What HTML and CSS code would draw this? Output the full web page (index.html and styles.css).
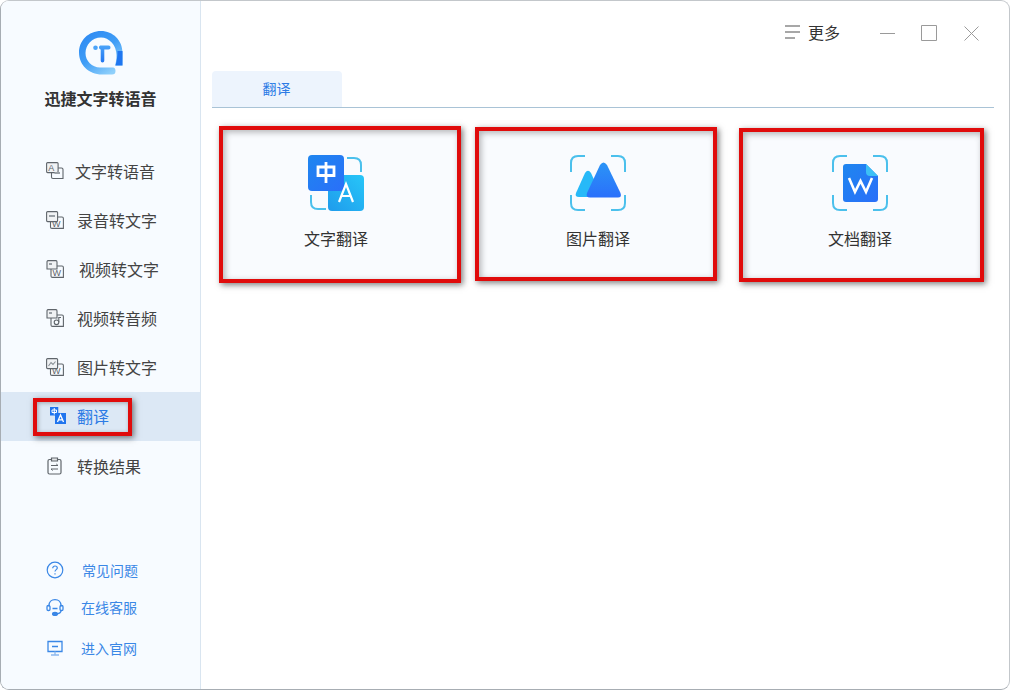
FILE: index.html
```html
<!DOCTYPE html>
<html lang="zh-CN">
<head>
<meta charset="utf-8">
<title>迅捷文字转语音</title>
<link rel="stylesheet" href="styles.css">
</head>
<body>
<div class="window">
  <aside class="sidebar">
    <div class="brand">
      <svg class="logo" width="46" height="46" viewBox="0 0 46 46">
        <defs>
          <linearGradient id="lg" x1="0" y1="0" x2="0.7" y2="1"><stop offset="0" stop-color="#2a86f2"/><stop offset="0.55" stop-color="#3f9df6"/><stop offset="1" stop-color="#8fd0fb"/></linearGradient>
          <linearGradient id="lt" x1="0" y1="0" x2="0" y2="1"><stop offset="0" stop-color="#4aa3f9"/><stop offset="1" stop-color="#1f74f0"/></linearGradient>
        </defs>
        <path fill="url(#lg)" d="M23 1C35 1 44.500 10.500 44.500 22.500V35.500H37C38 32 38.500 29 38.500 25C38.500 15 31 7.500 23 7.500C14 7.500 7.500 15 7.500 23C7.500 31 14 37.500 22 37.500H35Q37.500 37.500 37.500 41Q37.500 44.500 34 44.500H24C10.500 44.500 1 34.500 1 22.500C1 10.500 10.500 1 23 1Z"/>
        <path fill="#1f76f0" d="M39.500 21H44.500V35.500H37.500C38.800 31 39.500 26 39.500 21Z"/>
        <circle cx="17.500" cy="17.800" r="2.300" fill="#4aa3f9"/>
        <path fill="url(#lt)" d="M21 17.300C21 16 21.800 15.500 23 15.500H30.500C31.800 15.500 32.500 16.300 32.500 17.500C32.500 18.700 31.800 19.500 30.500 19.500H26.300V30.500C26.300 31.800 25.500 32.500 24.500 32.500C23.500 32.500 22.700 31.800 22.700 30.500V19.500C21.700 19.500 21 18.600 21 17.300Z"/>
      </svg>
      <h1 class="brand-name">迅捷文字转语音</h1>
    </div>

    <nav class="nav">
      <a class="nav-item">
        <svg class="nav-icon" width="18" height="18" viewBox="0 0 18 18" fill="none" stroke="#5f656b" stroke-width="1.100"><rect x="0.600" y="0.600" width="11.500" height="10" rx="1" fill="#f0f2f4"/><path d="M5.500 10.600V15Q5.500 16.500 7 16.500H17V7.500Q17 6 15.500 6H12.100"/><text x="2.300" y="8.800" class="icon-glyph">A</text><path stroke="#9aa0a6" stroke-width="2" d="M8.500 11H14"/></svg>
        <span class="nav-label">文字转语音</span>
      </a>
      <a class="nav-item nav-item-1">
        <svg class="nav-icon" width="18" height="18" viewBox="0 0 18 18" fill="none" stroke="#5f656b" stroke-width="1.100"><rect x="0.600" y="0.600" width="11" height="10" rx="1" fill="#f0f2f4"/><path d="M4.500 10.600V16Q4.500 17.400 6 17.400H17.400V7.500Q17.400 6 16 6H11.600"/><path stroke="#9aa0a6" stroke-width="2.200" d="M3 5H9"/><text x="6" y="16" class="icon-glyph">W</text></svg>
        <span class="nav-label">录音转文字</span>
      </a>
      <a class="nav-item nav-item-2">
        <svg class="nav-icon" width="18" height="18" viewBox="0 0 18 18" fill="none" stroke="#5f656b" stroke-width="1.100"><path d="M2 0.600H10Q11 0.600 11 2V9H1V2Q1 0.600 2 0.600Z" fill="#f0f2f4"/><path d="M5 9V16Q5 17.400 6.500 17.400H17.400V7.500Q17.400 6 16 6H11"/><path stroke="#9aa0a6" stroke-width="2" d="M3 4H6"/><text x="6.500" y="16" class="icon-glyph">W</text></svg>
        <span class="nav-label">视频转文字</span>
      </a>
      <a class="nav-item nav-item-1">
        <svg class="nav-icon" width="18" height="18" viewBox="0 0 18 18" fill="none" stroke="#5f656b" stroke-width="1.100"><path d="M2 0.600H10Q11 0.600 11 2V9H1V2Q1 0.600 2 0.600Z" fill="#f0f2f4"/><path d="M5 9V16Q5 17.400 6.500 17.400H17.400V7.500Q17.400 6 16 6H11"/><path stroke="#9aa0a6" stroke-width="2" d="M3 4H6"/><circle cx="10.500" cy="13.300" r="2.300"/><path d="M12.800 13.300V8.500H15"/></svg>
        <span class="nav-label">视频转音频</span>
      </a>
      <a class="nav-item nav-item-1">
        <svg class="nav-icon" width="18" height="18" viewBox="0 0 18 18" fill="none" stroke="#5f656b" stroke-width="1.100"><rect x="0.600" y="0.600" width="11" height="10" rx="1" fill="#f0f2f4"/><path d="M4.500 10.600V16Q4.500 17.400 6 17.400H17.400V7.500Q17.400 6 16 6H11.600"/><path stroke="#8a9096" d="M2.500 8L5 4.500L7 6.500L9.500 3.500"/><text x="6" y="16" class="icon-glyph">W</text></svg>
        <span class="nav-label">图片转文字</span>
      </a>
      <a class="nav-item nav-item-active">
        <svg class="nav-icon" width="16" height="17" viewBox="0 0 16 17"><path fill="#1f74ee" d="M0 0H8.500V8.500H0Z"/><path fill="#1f74ee" d="M5 6H16V17H5Z"/><path fill="#dce8f5" d="M8.500 0H11V6H8.500Z"/><path stroke="#fff" fill="none" d="M2 3H6.500V5.500H2Z M4.250 1V7.500"/><path stroke="#fff" stroke-width="1.300" fill="none" d="M7.500 15L10.500 8L13.500 15M8.500 12.800H12.500"/></svg>
        <span class="nav-label">翻译</span>
        <span class="mark mark-nav"></span>
      </a>
      <a class="nav-item nav-item-1 nav-item-last">
        <svg class="nav-icon" width="18" height="18" viewBox="0 0 18 18" fill="none" stroke="#5f656b" stroke-width="1.200"><path d="M5 2.500H3.500Q2 2.500 2 4V15.500Q2 17 3.500 17H13.500Q15 17 15 15.500V4Q15 2.500 13.500 2.500H12"/><path d="M5.500 1H11.500V4H5.500Z" fill="#e4e6e8"/><path d="M5 8.500H12L10.300 7M12 12H5L6.700 13.500" stroke-width="1"/></svg>
        <span class="nav-label">转换结果</span>
      </a>
    </nav>

    <div class="help">
      <a class="help-item">
        <svg width="18" height="18" viewBox="0 0 18 18" fill="none" stroke="#3a87e6" stroke-width="1.200"><circle cx="9" cy="9" r="7.800"/><path d="M6.700 7.200C6.700 5.800 7.800 5 9 5C10.300 5 11.300 5.900 11.300 7C11.300 8.600 9 8.700 9 10.600"/><path d="M9 12.300V13.400"/></svg>
        <span class="help-label help-label-a">常见问题</span>
      </a>
      <a class="help-item help-item-b">
        <svg width="18" height="18" viewBox="0 0 18 18" fill="none" stroke="#3a87e6" stroke-width="1.300"><path d="M3 8.500V7.500C3 4 5.500 1.700 9 1.700C12.500 1.700 15 4 15 7.500V8.500"/><rect x="1" y="7.500" width="3" height="5" rx="1.300"/><rect x="14" y="7.500" width="3" height="5" rx="1.300"/><path d="M15 12.500C15 14.500 13.500 15.500 11 15.800"/><ellipse cx="9" cy="15.900" rx="2.400" ry="1.400" fill="#3a87e6"/><path d="M6.500 10.500H11.500"/></svg>
        <span class="help-label">在线客服</span>
      </a>
      <a class="help-item help-item-c">
        <svg width="18" height="18" viewBox="0 0 18 18" fill="none" stroke="#3a87e6" stroke-width="1.300"><path d="M2 2.500H16V12.500H2Z"/><path d="M6 7.500H12"/><path d="M9 12.500V16M5 16H13" stroke="#8cb8ef"/></svg>
        <span class="help-label">进入官网</span>
      </a>
    </div>
  </aside>

  <main class="main">
    <header class="topbar">
      <div class="more">
        <svg width="16" height="16" viewBox="0 0 16 16" stroke="#8a8a8a" stroke-width="1.600"><path d="M0 2H15M0 8H15M0 14H10"/></svg>
        <span>更多</span>
      </div>
      <svg class="win-btn win-min" width="15" height="3" viewBox="0 0 15 3" stroke="#9a9a9a"><path d="M0 1.500H15"/></svg>
      <svg class="win-btn win-max" width="16" height="16" viewBox="0 0 16 16" fill="none" stroke="#9a9a9a"><path d="M0.500 0.500H15.500V15.500H0.500Z"/></svg>
      <svg class="win-btn win-close" width="15" height="15" viewBox="0 0 15 15" stroke="#9a9a9a"><path d="M0.500 0.500L14.500 14.500M14.500 0.500L0.500 14.500"/></svg>
    </header>

    <div class="tabs"><div class="tab">翻译</div></div>

    <section class="cards">
      <article class="card card-1">
        <svg class="card-icon" width="56" height="56" viewBox="0 0 56 56" fill="none">
          <defs>
            <linearGradient id="b1" x1="0" y1="0" x2="1" y2="1"><stop offset="0" stop-color="#1f86ef"/><stop offset="1" stop-color="#2a6ff9"/></linearGradient>
            <linearGradient id="b2" x1="1" y1="0" x2="0" y2="1"><stop offset="0" stop-color="#27c6f8"/><stop offset="1" stop-color="#1f9bec"/></linearGradient>
          </defs>
          <path d="M39 3H46Q53 3 53 10V17M3 40V47Q3 54 10 54H18" stroke="#4bc0ec" stroke-width="2"/>
          <rect x="20" y="20" width="36" height="36" rx="4" fill="url(#b2)"/>
          <rect width="36" height="36" rx="4" fill="url(#b1)"/>
          <path d="M10 12H26V20.500H10Z M18 7V28" stroke="#fff" stroke-width="2.800"/>
          <path d="M31 47L38 29L45 47M33.500 41H42.500" stroke="#fff" stroke-width="2.200"/>
        </svg>
        <h2 class="card-title">文字翻译</h2>
      </article>
      <article class="card card-2">
        <svg class="card-icon" width="56" height="56" viewBox="0 0 56 56" fill="none">
          <defs><linearGradient id="m1" x1="0" y1="0" x2="0" y2="1"><stop offset="0" stop-color="#2b94f6"/><stop offset="1" stop-color="#2a70fb"/></linearGradient></defs>
          <path d="M1 17V8Q1 1 8 1H15M41 1H48Q55 1 55 8V17M55 40V48Q55 55 48 55H41M15 55H8Q1 55 1 48V40" stroke="#4bc0ec" stroke-width="2"/>
          <path d="M6 38L15 18Q18 13.500 21 18L32 42H9Q4.500 42 6 38Z" fill="#27b9f8"/>
          <path d="M17 38L30 10Q33.500 5 37 10L50.500 38Q52 42.500 48 42.500H20Q15.500 42.500 17 38Z" fill="url(#m1)"/>
        </svg>
        <h2 class="card-title">图片翻译</h2>
      </article>
      <article class="card card-3">
        <svg class="card-icon" width="56" height="56" viewBox="0 0 56 56" fill="none">
          <path d="M1 17V8Q1 1 8 1H15M41 1H48Q55 1 55 8V17M55 40V48Q55 55 48 55H41M15 55H8Q1 55 1 48V40" stroke="#4bc0ec" stroke-width="2"/>
          <path d="M14 9H34L46 21V44Q46 47 43 47H14Q11 47 11 44V12Q11 9 14 9Z" fill="url(#b1)"/>
          <path d="M34 9L46 21H38Q34 21 34 17Z" fill="#3cc0f5"/>
          <path d="M17 23L23 37L28.500 26L34 37L40 23" stroke="#fff" stroke-width="2.600"/>
        </svg>
        <h2 class="card-title">文档翻译</h2>
      </article>
    </section>
  </main>
</div>
</body>
</html>
```
FILE: styles.css
```css
* { box-sizing: border-box; }
html, body { margin: 0; height: 100%; background: #fff; }
body { font-family: "Noto Sans CJK SC", "Liberation Sans", sans-serif; color: #333; overflow: hidden; }
a { color: inherit; text-decoration: none; }

.window {
  width: 1010px; height: 690px; display: flex;
  background: #fff;
  border: 1px solid #c3c7cb; border-left-color: #a7adb3; border-bottom-color: #a7adb3;
  border-radius: 9px; overflow: hidden;
}

.sidebar {
  width: 200px; flex: none; display: flex; flex-direction: column;
  background: #f7fbff; border-right: 1px solid #d9e5f0;
}
.brand { display: flex; flex-direction: column; align-items: center; padding: 29px 0 0 0; }
.logo { display: block; margin-bottom: 10px; }
.brand-name { margin: 0; font-size: 16px; font-weight: 700; line-height: 24px; color: #333; }

.nav { margin-top: 37px; display: flex; flex-direction: column; }
.nav-item { position: relative; height: 49px; display: flex; align-items: center; padding: 0 0 2px 45px; font-size: 16px; color: #444; }
.nav-item-last { padding-bottom: 0; }
.nav-icon { flex: none; display: block; }
.nav-label { margin-left: 11px; line-height: 24px; }
.nav-item-1 .nav-label { margin-left: 13px; }
.nav-item-2 .nav-label { margin-left: 15px; }
.nav-item-active { background: #dce8f5; color: #2c7be5; padding-left: 49px; }
.nav-item-active .nav-label { margin-left: 11px; }
.icon-glyph { font: 9px "Liberation Sans", sans-serif; fill: #5f656b; stroke: none; }

.mark { position: absolute; border: 4px solid #e00b0b; box-shadow: 2px 2px 6px rgba(40, 40, 40, .6), inset 1px 1px 4px rgba(40, 40, 40, .35); pointer-events: none; }
.mark-nav { left: 32px; top: 6px; width: 99px; height: 38px; }

.help { margin-top: auto; padding: 0 0 31px 45px; display: flex; flex-direction: column; color: #3a87e6; font-size: 14px; }
.help-item { height: 20px; display: flex; align-items: center; }
.help-item-b { margin-top: 17px; }
.help-item-c { margin-top: 21px; }
.help-item svg { flex: none; }
.help-label { margin-left: 17px; line-height: 20px; }
.help-label-a { margin-left: 18px; }

.main { flex: 1; min-width: 0; display: flex; flex-direction: column; }
.topbar { height: 70px; display: flex; align-items: flex-start; padding: 20px 0 0 584px; }
.more { display: flex; align-items: center; gap: 7px; font-size: 16px; line-height: 22px; color: #333; width: 95px; }
.win-btn { flex: none; display: block; }
.win-min { margin-top: 11px; }
.win-max { margin-left: 26px; margin-top: 4px; }
.win-close { margin-left: 27px; margin-top: 5px; }

.tabs { margin: 0 15px 0 11px; height: 37px; border-bottom: 1px solid #a9c3d6; }
.tab { width: 130px; height: 36px; line-height: 35px; padding-right: 1px; text-align: center; font-size: 14px; color: #2c7be5; background: #edf4fd; border-radius: 4px 4px 0 0; }

.cards { display: flex; align-items: flex-start; padding: 18px 0 0 18px; }
.card {
  position: relative; display: flex; flex-direction: column; align-items: center;
  background: #f9fbfe; border: 4px solid #e00b0b;
  box-shadow: 2px 2px 6px rgba(40, 40, 40, .6), inset 2px 2px 6px rgba(40, 40, 40, .35);
}
.card-1 { width: 242px; height: 157px; padding: 25px 8px 0 0; }
.card-2 { width: 242px; height: 154px; margin: 1px 0 0 14px; padding: 24px 0 0 4px; }
.card-3 { width: 245px; height: 154px; margin: 2px 0 0 22px; padding: 23px 3px 0 0; }
.card-icon { display: block; flex: none; }
.card-title { margin: 15px 0 0; font-size: 16px; font-weight: 400; line-height: 24px; color: #333; }
```
